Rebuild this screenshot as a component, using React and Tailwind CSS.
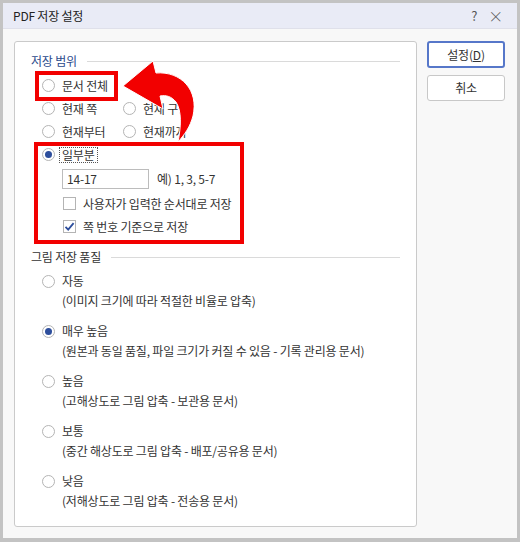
import React from "react";

const FONT = { fontFamily: '"Noto Sans CJK KR", "Noto Sans", sans-serif' };

function Radio({ checked }) {
  return (
    <span className="flex h-[13px] w-[13px] shrink-0 items-center justify-center rounded-full border border-[#b4b4b4] bg-white">
      {checked && <span className="h-[7px] w-[7px] rounded-full bg-[#2d4e9c]" />}
    </span>
  );
}

function Check({ checked }) {
  return (
    <span className="flex h-[13px] w-[13px] shrink-0 items-center justify-center border border-[#b4b4b4] bg-white">
      {checked && (
        <svg width="11" height="11" viewBox="0 0 11 11">
          <path d="M1.5 5.8 L4.2 8.6 L9.6 2.2" fill="none" stroke="#2d4e9c" strokeWidth="1.8" />
        </svg>
      )}
    </span>
  );
}

function Heading({ children, blue }) {
  return (
    <div className="flex h-[20px] items-center pr-[16px]">
      <span className={blue ? "text-[#2b4a8b]" : "text-[#333]"}>{children}</span>
      <span className="ml-[10px] h-px flex-1 bg-[#dadada]" />
    </div>
  );
}

function RadioLabel({ checked, children, className = "" }) {
  return (
    <div className={"flex items-center " + className}>
      <Radio checked={checked} />
      <span className="ml-[7px]">{children}</span>
    </div>
  );
}

const quality = [
  ["자동", "(이미지 크기에 따라 적절한 비율로 압축)", false],
  ["매우 높음", "(원본과 동일 품질, 파일 크기가 커질 수 있음 - 기록 관리용 문서)", true],
  ["높음", "(고해상도로 그림 압축 - 보관용 문서)", false],
  ["보통", "(중간 해상도로 그림 압축 - 배포/공유용 문서)", false],
  ["낮음", "(저해상도로 그림 압축 - 전송용 문서)", false],
];

export default function App() {
  return (
    <div
      className="relative flex h-[542px] w-[520px] flex-col bg-[#c3c3c3] px-[3px] pb-[4px] pt-[3px] text-[12px] leading-none tracking-[-0.2px] text-[#333]"
      style={FONT}
    >
      <div className="flex flex-1 flex-col bg-[#f8f8f8]">
        <div className="flex h-[26px] items-center border-b border-[#dfe0ea] bg-[#e9ebf6] pl-[10px] pr-[14px]">
          <span className="text-[12px] text-[#222]">PDF 저장 설정</span>
          <span className="ml-auto text-[13px] text-[#555]">?</span>
          <span className="ml-[11px] text-[15px] font-light text-[#555]">×</span>
        </div>
        <div className="flex flex-1 gap-[10px] pl-[11px] pr-[11px] pt-[12px]">
          <div className="flex h-[486px] w-[403px] flex-col rounded-[3px] border border-[#cacaca] bg-white pl-[16px] pt-[9px]">
            <Heading blue>저장 범위</Heading>
            <div className="ml-[11px] mt-[3px] flex flex-col">
              <div className="flex h-[23px] items-center">
                <RadioLabel>문서 전체</RadioLabel>
              </div>
              <div className="flex h-[23px] items-center">
                <RadioLabel className="w-[81px]">현재 쪽</RadioLabel>
                <RadioLabel>현재 구역</RadioLabel>
              </div>
              <div className="flex h-[23px] items-center">
                <RadioLabel className="w-[81px]">현재부터</RadioLabel>
                <RadioLabel>현재까지</RadioLabel>
              </div>
              <div className="flex h-[23px] items-center">
                <Radio checked />
                <span className="ml-[4px] border border-dotted border-[#555] px-[2px] py-[1px]">일부분</span>
              </div>
            </div>
            <div className="ml-[31px] mt-[3px] flex items-center">
              <div className="flex h-[20px] w-[87px] items-center border border-[#bcbcbc] bg-white pl-[4px]">14-17</div>
              <span className="ml-[8px]">예) 1, 3, 5-7</span>
            </div>
            <div className="ml-[32px] mt-[3px] flex flex-col">
              <div className="flex h-[23px] items-center">
                <Check />
                <span className="ml-[7px]">사용자가 입력한 순서대로 저장</span>
              </div>
              <div className="flex h-[23px] items-center">
                <Check checked />
                <span className="ml-[7px]">쪽 번호 기준으로 저장</span>
              </div>
            </div>
            <div className="mt-[9px]">
              <Heading>그림 저장 품질</Heading>
            </div>
            <div className="mt-[4px] flex flex-col gap-[10px]">
              {quality.map(([label, desc, checked]) => (
                <div key={label} className="flex flex-col">
                  <div className="ml-[11px] flex h-[20px] items-center">
                    <RadioLabel checked={checked}>{label}</RadioLabel>
                  </div>
                  <div className="ml-[31px] flex h-[20px] items-center">{desc}</div>
                </div>
              ))}
            </div>
          </div>
          <div className="flex w-[78px] flex-col gap-[7px]">
            <button className="flex h-[27px] items-center justify-center rounded-[3px] border-[2px] border-[#5677c9] bg-white text-[12px] text-[#333]">
              설정(<span className="underline">D</span>)
            </button>
            <button className="flex h-[26px] items-center justify-center rounded-[3px] border border-[#c8c8c8] bg-white text-[12px] text-[#333]">
              취소
            </button>
          </div>
        </div>
      </div>
      <svg className="pointer-events-none absolute left-0 top-0" width="520" height="542" viewBox="0 0 520 542">
        <rect x="37" y="73" width="79" height="26" fill="none" stroke="#f20000" strokeWidth="4" />
        <rect x="36" y="144" width="206" height="98" fill="none" stroke="#f20000" strokeWidth="4" />
        <path
          d="M123 86 L153 61 L156 73 C181 71 199 90 193 116 C190 127 185 134 178 142 C181 127 182 111 176 102 C171 96 166 95 160 96 L163 109 Z"
          fill="#f20000"
          stroke="#fff"
          strokeWidth="1"
        />
      </svg>
    </div>
  );
}
